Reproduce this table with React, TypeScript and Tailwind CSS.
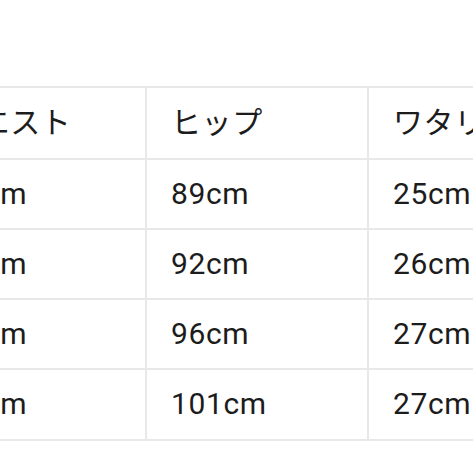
import React from "react";

const header = ["ウエスト", "ヒップ", "ワタリ幅"];
const rows = [
  ["66cm", "89cm", "25cm"],
  ["70cm", "92cm", "26cm"],
  ["74cm", "96cm", "27cm"],
  ["78cm", "101cm", "27cm"],
];

function Row({ cells, h }: { cells: string[]; h: string }) {
  return (
    <div className={`flex ${h} border-b-2 border-[#e8e8e8]`}>
      {cells.map((c, i) => (
        <div
          key={i}
          className="w-[222px] shrink-0 flex items-center pl-[24px] pb-[2px] border-r-2 border-[#e8e8e8] whitespace-nowrap"
        >
          {c}
        </div>
      ))}
    </div>
  );
}

export default function App() {
  return (
    <div
      className="w-[473px] h-[473px] overflow-hidden bg-white text-[#1c1c1c] text-[30px] tracking-[0.6px]"
      style={{ fontFamily: 'Roboto, "Noto Sans CJK JP", sans-serif' }}
    >
      <div className="mt-[86px] ml-[-75px] w-[700px] border-t-2 border-[#e8e8e8]">
        <Row cells={header} h="h-[72px]" />
        <Row cells={rows[0]} h="h-[70px]" />
        <Row cells={rows[1]} h="h-[70px]" />
        <Row cells={rows[2]} h="h-[70px]" />
        <Row cells={rows[3]} h="h-[71px]" />
      </div>
    </div>
  );
}
